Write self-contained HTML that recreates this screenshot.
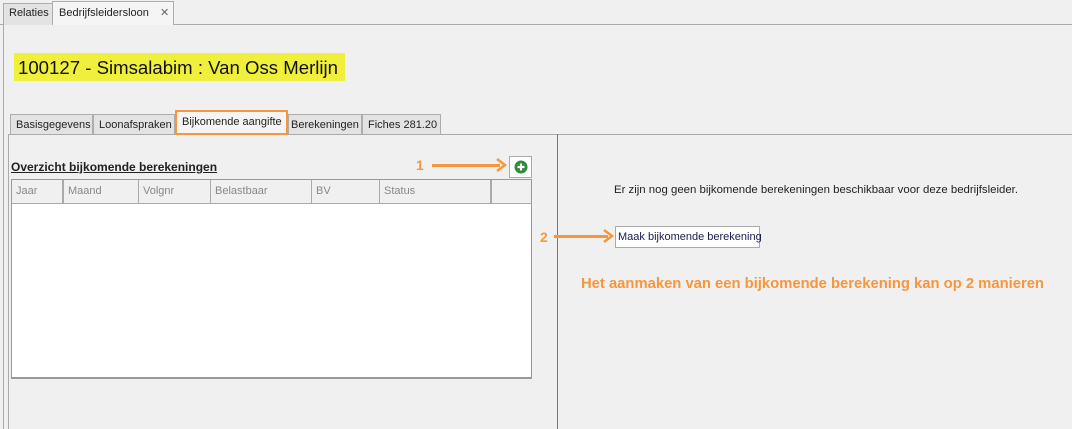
<!DOCTYPE html>
<html><head><style>
*{margin:0;padding:0;box-sizing:border-box}
body{width:1072px;height:429px;background:#f0f0f0;font-family:"Liberation Sans",sans-serif;font-size:11px;color:#222;position:relative;overflow:hidden}
.a{position:absolute}
.tab{position:absolute;border:1px solid #adadad;border-bottom:none;background:#e3e3e3;padding-left:5px;line-height:20px;white-space:nowrap}
.hdr{position:absolute;top:0;height:24px;border-right:1px solid #aaa;color:#888;padding:5px 0 0 4px}
.or{color:#f7963c;font-weight:bold}
</style></head><body>
<div class="a" style="left:0;top:24px;width:1072px;height:1px;background:#aaa"></div>
<div class="tab" style="left:3px;top:3px;width:50px;height:22px;font-size:11px;line-height:19px">Relaties</div>
<div class="tab" style="left:52px;top:1px;width:122px;height:24px;background:#f5f5f5;padding-left:6px;line-height:22px">Bedrijfsleidersloon <span style="color:#666;margin-left:8px">✕</span></div>
<div class="a" style="left:3px;top:24px;width:1px;height:405px;background:#aaa"></div>
<div class="a" style="left:14px;top:53px;width:331px;height:28px;background:#f0f03c"></div>
<div class="a" style="left:18px;top:57px;font-size:18.6px;color:#111;white-space:nowrap">100127 - Simsalabim : Van Oss Merlijn</div>
<div class="a" style="left:8px;top:134px;width:1064px;height:1px;background:#aaa"></div>
<div class="a" style="left:8px;top:134px;width:1px;height:295px;background:#aaa"></div>
<div class="a" style="left:557px;top:134px;width:1px;height:295px;background:#777"></div>
<div class="tab" style="left:10px;top:114px;width:83px;height:20px">Basisgegevens</div>
<div class="tab" style="left:93px;top:114px;width:82px;height:20px">Loonafspraken</div>
<div class="tab" style="left:175px;top:110px;width:113px;height:25px;border:2px solid #f7963c;background:#f5f5f5;padding-left:5px;line-height:21px">Bijkomende aangifte</div>
<div class="tab" style="left:288px;top:114px;width:74px;height:20px;padding-left:2px">Berekeningen</div>
<div class="tab" style="left:362px;top:114px;width:79px;height:20px">Fiches 281.20</div>
<div class="a" style="left:11px;top:160px;font-weight:bold;text-decoration:underline;font-size:12px">Overzicht bijkomende berekeningen</div>
<div class="a or" style="left:416px;top:157px;font-size:14px">1</div>
<div class="a" style="left:432px;top:164px;width:68px;height:3px;background:#f7963c"></div>
<svg class="a" style="left:494px;top:158px" width="14" height="14"><polyline points="3,1 11,7 3,13" fill="none" stroke="#f7963c" stroke-width="2.5"/></svg>
<div class="a" style="left:509px;top:156px;width:23px;height:22px;background:#fff;border:1px solid #aaa"></div>
<svg class="a" style="left:514px;top:160px" width="14" height="14"><circle cx="7" cy="7" r="6.5" fill="#2e8b3e"/><path d="M7 3.5v7M3.5 7h7" stroke="#fff" stroke-width="2.2"/></svg>
<div class="a" style="left:11px;top:179px;width:521px;height:200px;background:#fff;border:1px solid #999;border-bottom:2px solid #999">
<div class="a" style="left:0;top:0;width:519px;height:24px;background:#f0f0f0;border-bottom:1px solid #aaa"></div>
<div class="hdr" style="left:0;width:52px;border-right:2px solid #aaa">Jaar</div>
<div class="hdr" style="left:52px;width:75px">Maand</div>
<div class="hdr" style="left:127px;width:72px">Volgnr</div>
<div class="hdr" style="left:199px;width:101px">Belastbaar</div>
<div class="hdr" style="left:300px;width:68px">BV</div>
<div class="hdr" style="left:368px;width:112px;border-right:2px solid #aaa">Status</div>
</div>
<div class="a" style="left:614px;top:184px;white-space:nowrap;font-size:11.4px">Er zijn nog geen bijkomende berekeningen beschikbaar voor deze bedrijfsleider.</div>
<div class="a or" style="left:540px;top:229px;font-size:14px">2</div>
<div class="a" style="left:554px;top:235px;width:54px;height:3px;background:#f7963c"></div>
<svg class="a" style="left:601px;top:229px" width="14" height="14"><polyline points="3,1 11,7 3,13" fill="none" stroke="#f7963c" stroke-width="2.5"/></svg>
<div class="a" style="left:615px;top:226px;width:145px;height:22px;background:#fff;border:1px solid #aaa;padding:4px 0 0 2px;color:#1a1a50;white-space:nowrap">Maak bijkomende berekening</div>
<div class="a or" style="left:581px;top:276px;font-size:14.8px;white-space:nowrap">Het aanmaken van een bijkomende berekening kan op 2 manieren</div>
</body></html>
